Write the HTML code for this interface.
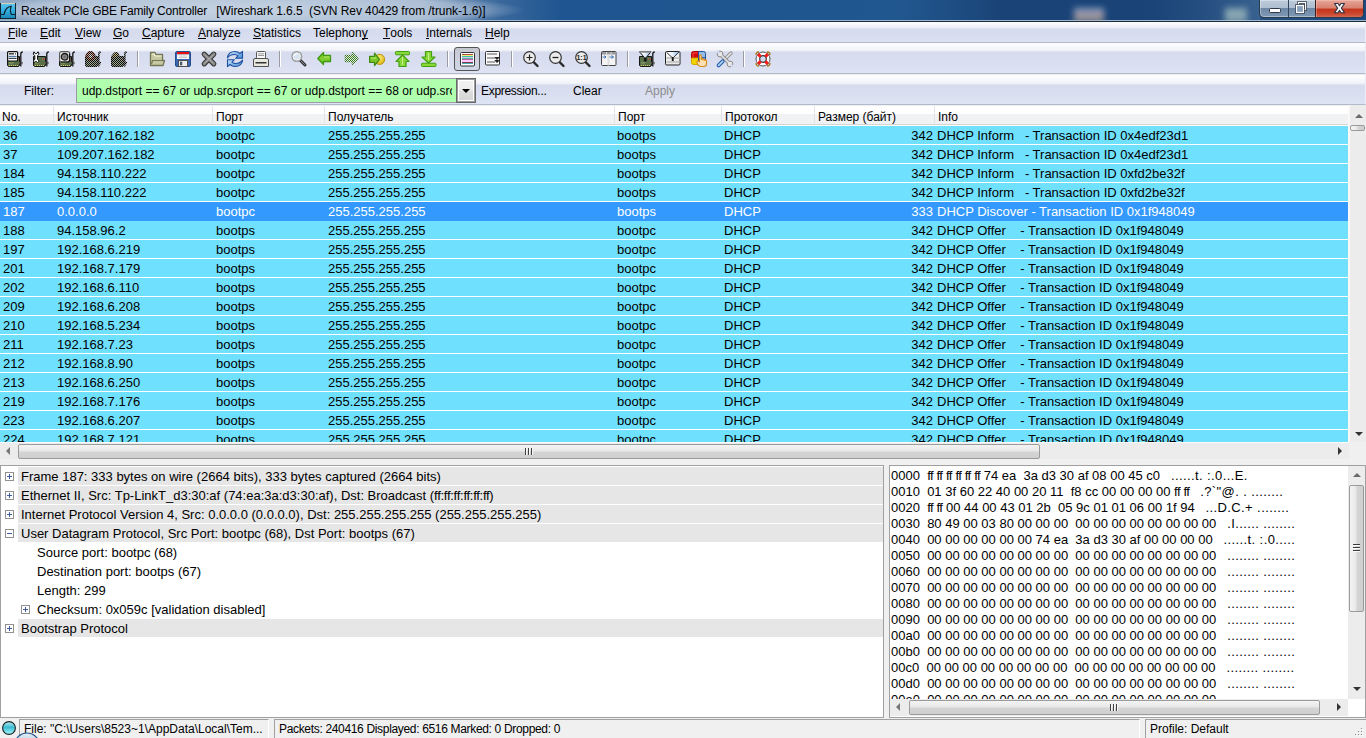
<!DOCTYPE html>
<html><head><meta charset="utf-8">
<style>
*{margin:0;padding:0;box-sizing:border-box}
html,body{width:1366px;height:738px;overflow:hidden;background:#f0f0f0;font-family:"Liberation Sans",sans-serif;color:#000;position:relative}
.abs{position:absolute}
#title{left:0;top:0;width:1366px;height:22px;overflow:hidden;background:linear-gradient(90deg,#8ea6c2 0px,#9bb0c9 200px,#8aa3c0 420px,#3a689c 500px,#1f5590 560px,#21578f 900px,#1a4478 1000px,#1a4478 1200px,#244f80 1260px,#1c4a80 1366px);border-bottom:1px solid #1a2b40}
#title .hl{left:0;top:20px;width:1366px;height:1px;background:#9fb6cf}
#title .glow{left:0;top:0;width:540px;height:20px;background:radial-gradient(ellipse 275px 18px at 250px 10px,rgba(215,225,238,.7),rgba(215,225,238,.45) 80%,rgba(215,225,238,0) 100%)}
#title .blob{top:8px;height:14px;filter:blur(3px);opacity:.8}
#title .txt{left:21px;top:4px;font-size:12px;color:#000;white-space:pre;letter-spacing:-0.13px}
.bar{position:absolute;left:0;width:1366px;border-bottom:1px solid #b3b8cb;border-right:1px solid #eceff8}
#menu{top:22px;height:21px;background:linear-gradient(#fefefe 0,#eef0f7 5px,#e6e9f4 6px,#d5dbee 7px,#d8ddef 15px,#dde2f2 20px)}
#menu span{position:absolute;top:4px;font-size:12px;white-space:pre}
#menu u{text-decoration:none;border-bottom:1px solid #000;display:inline-block;line-height:10px}
#tool{top:43px;height:31px;background:linear-gradient(#fefefe 0,#f2f4f9 7px,#e9ecf6 8px,#d6dcee 9px,#d9def0 20px,#dfe4f4 30px)}
#filt{top:74px;height:31px;background:linear-gradient(#eeeeee 0,#eeeeee 1px,#fefefe 1px,#f2f4f9 9px,#e9ecf6 10px,#d6dcee 11px,#d9def0 20px,#dfe4f4 30px)}
.sep{position:absolute;top:8px;width:2px;height:16px;border-left:1px solid #9c9ca0;border-right:1px solid #fff}
.ico{position:absolute;top:8px;width:16px;height:16px;overflow:visible}
#fbox{left:76px;top:4px;width:381px;height:25px;background:#afffaf;border:1px solid #9c9ca8;font-size:12px;padding:5px 0 0 5px;white-space:pre;overflow:hidden}
#fbtn{left:456px;top:4px;width:20px;height:25px;border:1px solid #6a6a6a;outline:1px solid #9a9a9a;outline-offset:-2px;box-shadow:inset 0 0 0 2px #fff;background:linear-gradient(#f2f2f2,#ececec 48%,#dedede 52%,#d4d4d4)}
#fbtn:after{content:"";position:absolute;left:5px;top:10px;border-left:4px solid transparent;border-right:4px solid transparent;border-top:4px solid #000}
.flab{position:absolute;top:10px;font-size:12px;white-space:pre}
#plist{left:0;top:105px;width:1348px;height:337px;background:#fff;overflow:hidden}
#phead{left:0;top:0;width:1348px;height:21px;background:linear-gradient(#f0f0f0 0,#f0f0f0 1px,#fff 1px,#fff 9px,#f1f2f4 9px,#f1f2f4 19px,#d5d5d5 19px,#d5d5d5 20px,#fff 20px)}
#phead div{position:absolute;top:1px;height:18px;font-size:12px;padding:4px 0 0 3px;border-left:1px solid #e3e4e6;white-space:pre}
#phead div:first-child{border-left:none;padding-left:2px}
.row{position:absolute;left:0;width:1348px;height:19px;background:linear-gradient(#70e0ff 0,#70e0ff 18px,#fff 18px);font-size:13px;white-space:pre}
.row.sel{background:#3399ff;color:#fff}
.row span{position:absolute;top:2px}
#vsb1{left:1348px;top:105px;width:18px;height:337px;background:#ececec;border-left:2px solid #fbf8f8}
.sbtn{position:absolute;width:15px;height:17px}
.up:after{content:"";position:absolute;left:4px;top:6px;border-left:4px solid transparent;border-right:4px solid transparent;border-bottom:4px solid #6a6a6a}
.dn:after{content:"";position:absolute;left:4px;top:7px;border-left:4px solid transparent;border-right:4px solid transparent;border-top:4px solid #333}
.lt:after{content:"";position:absolute;left:5px;top:4px;border-top:4px solid transparent;border-bottom:4px solid transparent;border-right:4px solid #777}
.rt:after{content:"";position:absolute;left:7px;top:4px;border-top:4px solid transparent;border-bottom:4px solid transparent;border-left:4px solid #333}
.thumbv{position:absolute;border:1px solid #9b9b9b;border-radius:2px;background:linear-gradient(90deg,#f4f4f4,#e8e8e8 45%,#d4d4d4 55%,#cfcfcf)}
.griph{position:absolute;width:8px;height:7px;background:repeating-linear-gradient(90deg,#3c3c3c 0,#3c3c3c 2px,transparent 2px,transparent 3px)}
.gripv{position:absolute;width:7px;height:8px;background:repeating-linear-gradient(#3c3c3c 0,#3c3c3c 1px,#fafafa 1px,#fafafa 2px,transparent 2px,transparent 3px)}
.thumbh{position:absolute;border:1px solid #9b9b9b;border-radius:2px;background:linear-gradient(#f4f4f4,#e8e8e8 45%,#d4d4d4 55%,#cfcfcf)}
#hsb1{left:0;top:442px;width:1349px;height:17px;background:#ececec;border-top:1px solid #fafafa}
#detail{left:0;top:465px;width:884px;height:253px;background:#fff;border:1px solid #a0a0a0;border-right-color:#a0a0a0;overflow:hidden}
.dbg{position:absolute;left:17px;width:865px;height:18px;background:#e6e6e6}
.dt{position:absolute;font-size:13px;white-space:pre;padding-top:2px;height:18px}
.exp{position:absolute;width:9px;height:9px;border:1px solid #919191;background:#fff}
.exp:before{content:"";position:absolute;left:1px;top:3px;width:5px;height:1px;background:#3d5ea0}
.exp.plus:after{content:"";position:absolute;left:3px;top:1px;width:1px;height:5px;background:#3d5ea0}
#hex{left:889px;top:465px;width:477px;height:253px;background:#fff;border:1px solid #a0a0a0;overflow:hidden}
.hx{position:absolute;left:1px;font-size:13px;white-space:pre;line-height:16px}
#vsb2{left:1347px;top:1px;width:17px;height:233px;background:#ececec}
#hsb2{left:1px;top:234px;width:457px;height:17px;background:#ececec}
#status{left:0;top:718px;width:1366px;height:20px;background:#f0f0f0}
.pan{position:absolute;top:1px;height:19px;border-top:1px solid #a0a0a0;border-left:1px solid #a0a0a0;border-right:1px solid #fff;font-size:12px;white-space:pre;padding:2px 0 0 4px;overflow:hidden}
</style></head><body>
<div id="title" class="abs">
 <div class="glow abs"></div>
 <div class="hl abs"></div>
 <div class="blob abs" style="left:1074px;width:30px;background:linear-gradient(#a8c0dc,#c8a0a0 60%,#b0c0a0);opacity:.75"></div>
 <div class="blob abs" style="left:1225px;width:22px;background:#c0d4c8;opacity:.75"></div>
 <div class="abs" style="left:1150px;top:0;width:110px;height:20px;background:linear-gradient(90deg,rgba(90,130,170,0),rgba(90,130,170,.35))"></div>
 <svg class="abs" style="left:0;top:3px" width="16" height="16" viewBox="0 0 16 16"><defs><linearGradient id="wsg" x1="0" y1="0" x2="0" y2="1"><stop offset="0" stop-color="#5cc4ec"/><stop offset=".45" stop-color="#36aee0"/><stop offset="1" stop-color="#1887b8"/></linearGradient></defs><rect x="0.5" y="0.5" width="15" height="15" fill="url(#wsg)" stroke="#0c2432"/><path d="M1 0.5 H15" stroke="#d8d0b8"/><path d="M1 11.5 H4 C5 6.5 7.5 3.5 11.2 3.3 C10 6 10.2 10 11.5 11.5 H15" stroke="#0d2533" stroke-width="1.2" fill="none"/></svg>
 <div class="txt abs"><span style="letter-spacing:-.22px">Realtek PCIe GBE Family Controller   </span><span style="letter-spacing:-.07px">[Wireshark 1.6.5  (SVN Rev 40429 from /trunk-1.6)]</span></div>
 <div class="abs" style="left:1259px;top:0;width:105px;height:18px;border:1px solid #2b3a4c;border-top:none;border-radius:0 0 5px 5px;overflow:hidden;background:linear-gradient(#bccbdb,#aebfd1 45%,#6f88a6 50%,#7f98b4 100%);box-shadow:inset 0 0 0 1px rgba(255,255,255,.35)">
  <div class="abs" style="left:28px;top:0;width:1px;height:18px;background:#34465c"></div>
  <div class="abs" style="left:55px;top:0;width:49px;height:18px;background:linear-gradient(#e6a699,#d9806f 45%,#c3341c 50%,#cc4a30 80%,#d9775e);border-left:1px solid #3d1e1a;box-shadow:inset 0 0 0 1px rgba(255,220,210,.35)"></div>
 </div>
 <svg class="abs" style="left:1259px;top:0" width="107" height="20" viewBox="0 0 107 20">
  <rect x="10.5" y="8.5" width="11" height="4" rx="1" fill="#fff" stroke="#2d3644"/>
  <rect x="39.5" y="2.5" width="7" height="7" fill="none" stroke="#2d3644" stroke-width="2.6"/>
  <rect x="39.5" y="2.5" width="7" height="7" fill="none" stroke="#fff" stroke-width="1.2"/>
  <rect x="37.5" y="5.5" width="7" height="7" fill="#8aa2bc" stroke="#2d3644" stroke-width="2.6"/>
  <rect x="37.5" y="5.5" width="7" height="7" fill="#8aa2bc" stroke="#fff" stroke-width="1.2"/>
  <path d="M75.5 3.5 H79 L80.5 5.8 L82 3.5 H85.5 L82.4 8.1 L85.5 12.7 H82 L80.5 10.4 L79 12.7 H75.5 L78.6 8.1 Z" fill="#fafafa" stroke="#2b3345" stroke-width="1.1" stroke-linejoin="round"/>
 </svg>
</div>
<div id="menu" class="bar">
 <span style="left:8px"><u>F</u>ile</span>
 <span style="left:40px"><u>E</u>dit</span>
 <span style="left:75px"><u>V</u>iew</span>
 <span style="left:113px"><u>G</u>o</span>
 <span style="left:142px"><u>C</u>apture</span>
 <span style="left:198px"><u>A</u>nalyze</span>
 <span style="left:253px"><u>S</u>tatistics</span>
 <span style="left:313px">Telephon<u>y</u></span>
 <span style="left:383px"><u>T</u>ools</span>
 <span style="left:426px"><u>I</u>nternals</span>
 <span style="left:485px"><u>H</u>elp</span>
</div>
<div id="tool" class="bar">
<svg width="0" height="0" style="position:absolute"><defs><filter id="lite" color-interpolation-filters="sRGB"><feColorMatrix type="matrix" values=".45 0 0 0 .45  0 .45 0 0 .45  0 0 .45 0 .45  0 0 0 1 0"/></filter><filter id="blk" color-interpolation-filters="sRGB"><feColorMatrix type="matrix" values=".12 0 0 0 0  0 .12 0 0 0  0 0 .12 0 0  0 0 0 1 0"/></filter><pattern id="chk" width="2" height="2" patternUnits="userSpaceOnUse"><rect x="0" y="0" width="1" height="1" fill="#fff"/><rect x="1" y="1" width="1" height="1" fill="#fff"/></pattern><mask id="dith" maskUnits="userSpaceOnUse" x="0" y="0" width="16" height="16"><rect width="16" height="16" fill="url(#chk)"/></mask><pattern id="chk2" width="2" height="2" patternUnits="userSpaceOnUse"><rect x="1" y="0" width="1" height="1" fill="#fff"/><rect x="0" y="1" width="1" height="1" fill="#fff"/></pattern><mask id="dith2" maskUnits="userSpaceOnUse" x="0" y="0" width="16" height="16"><rect width="16" height="16" fill="url(#chk2)"/></mask></defs></svg><div class="abs" style="left:454px;top:4px;width:26px;height:24px;border:1px solid #545454;border-radius:3px;background:linear-gradient(#c4c6ce,#cdd0dc 40%,#d2d7e8)"></div><div class="sep" style="left:137px"></div><div class="sep" style="left:279px"></div><div class="sep" style="left:447px"></div><div class="sep" style="left:511px"></div><div class="sep" style="left:627px"></div><div class="sep" style="left:743px"></div><svg class="ico" style="left:7px;top:8px" width="16" height="16" viewBox="0 0 16 16"><path d="M0.5 5.5 H12.5 V14.5 H11.5 V15.5 H1.5 L0.5 14.5Z" fill="#58704a" stroke="#161616"/><path d="M2 14.5 H3 M4 14.5 H5 M6 14.5 H7 M8 14.5 H9 M10 14.5 H11" stroke="#d8c866" stroke-width="1"/><path d="M2 11.5 H7 M2 12.7 H6" stroke="#8a9a62" stroke-width=".7"/><rect x="12.5" y="10.8" width="3.5" height="2.4" fill="#8f8f8f"/><path d="M15.8 1 Q13.8 1 13.8 3 V15.5" stroke="#151515" fill="none" stroke-width="1.3"/><rect x="9" y="7.5" width="1" height="1.3" fill="#e05050"/><rect x="11" y="7.5" width="1" height="1.3" fill="#e05050"/><rect x="0.6" y="0.6" width="10" height="9.4" rx="1" fill="#fff" stroke="#111" stroke-width="1.2"/><rect x="2" y="2" width="5" height="1.6" fill="#4a4a4a"/><rect x="8" y="2" width="1" height="1.6" fill="#666"/><rect x="1.6" y="4.8" width="8" height="1.1" fill="#3f6d98"/><rect x="1.6" y="6.8" width="8" height="1.1" fill="#1f2f40"/></svg>
<svg class="ico" style="left:33px;top:8px" width="16" height="16" viewBox="0 0 16 16"><path d="M0.5 5.5 H12.5 V14.5 H11.5 V15.5 H1.5 L0.5 14.5Z" fill="#58704a" stroke="#161616"/><path d="M2 14.5 H3 M4 14.5 H5 M6 14.5 H7 M8 14.5 H9 M10 14.5 H11" stroke="#d8c866" stroke-width="1"/><path d="M2 11.5 H7 M2 12.7 H6" stroke="#8a9a62" stroke-width=".7"/><rect x="12.5" y="10.8" width="3.5" height="2.4" fill="#8f8f8f"/><path d="M15.8 1 Q13.8 1 13.8 3 V15.5" stroke="#151515" fill="none" stroke-width="1.3"/><rect x="9" y="7.5" width="1" height="1.3" fill="#e05050"/><rect x="11" y="7.5" width="1" height="1.3" fill="#e05050"/><path d="M1 0.8 L2.2 2.6 H3.8 L5 0.8 L5.8 2 V3.5 L4.5 4.5 V8.5 L5.8 9.5 V11 L4.5 11.5 L3.5 10.5 H2.5 L1.2 11.5 L0.6 10.5 V9.5 L1.8 8.5 V4.5 L0.4 3.5 V2Z" fill="#fff" stroke="#111" stroke-width="1"/></svg>
<svg class="ico" style="left:59px;top:8px" width="16" height="16" viewBox="0 0 16 16"><path d="M0.5 5.5 H12.5 V14.5 H11.5 V15.5 H1.5 L0.5 14.5Z" fill="#58704a" stroke="#161616"/><path d="M2 14.5 H3 M4 14.5 H5 M6 14.5 H7 M8 14.5 H9 M10 14.5 H11" stroke="#d8c866" stroke-width="1"/><path d="M2 11.5 H7 M2 12.7 H6" stroke="#8a9a62" stroke-width=".7"/><rect x="12.5" y="10.8" width="3.5" height="2.4" fill="#8f8f8f"/><path d="M15.8 1 Q13.8 1 13.8 3 V15.5" stroke="#151515" fill="none" stroke-width="1.3"/><rect x="9" y="7.5" width="1" height="1.3" fill="#e05050"/><rect x="11" y="7.5" width="1" height="1.3" fill="#e05050"/><rect x="0.6" y="0.6" width="10" height="10.4" rx="2" fill="#e8e8e8" stroke="#5a5a5a" stroke-width="1.1"/><path d="M10.6 2.5 V9 Q10.6 11 8.6 11 H2" stroke="#111" stroke-width="1.2" fill="none"/><circle cx="5.6" cy="5.8" r="3.3" fill="#8a8a8a" stroke="#1a1a1a" stroke-width="1.3"/><circle cx="5.6" cy="5.8" r="1.3" fill="#6a6a6a"/></svg>
<svg class="ico" style="left:85px;top:8px" width="16" height="16" viewBox="0 0 16 16"><g filter="url(#lite)"><path d="M0.5 5.5 H12.5 V14.5 H11.5 V15.5 H1.5 L0.5 14.5Z" fill="#58704a" stroke="#161616"/><path d="M2 14.5 H3 M4 14.5 H5 M6 14.5 H7 M8 14.5 H9 M10 14.5 H11" stroke="#d8c866" stroke-width="1"/><path d="M2 11.5 H7 M2 12.7 H6" stroke="#8a9a62" stroke-width=".7"/><rect x="12.5" y="10.8" width="3.5" height="2.4" fill="#8f8f8f"/><path d="M15.8 1 Q13.8 1 13.8 3 V15.5" stroke="#151515" fill="none" stroke-width="1.3"/><rect x="9" y="7.5" width="1" height="1.3" fill="#e05050"/><rect x="11" y="7.5" width="1" height="1.3" fill="#e05050"/><circle cx="5.5" cy="5" r="4.5" fill="#c24a1d" stroke="#5a1a0a"/><circle cx="5.5" cy="5" r="2" fill="#fff"/></g><g mask="url(#dith)"><g filter="url(#blk)"><path d="M0.5 5.5 H12.5 V14.5 H11.5 V15.5 H1.5 L0.5 14.5Z" fill="#58704a" stroke="#161616"/><path d="M2 14.5 H3 M4 14.5 H5 M6 14.5 H7 M8 14.5 H9 M10 14.5 H11" stroke="#d8c866" stroke-width="1"/><path d="M2 11.5 H7 M2 12.7 H6" stroke="#8a9a62" stroke-width=".7"/><rect x="12.5" y="10.8" width="3.5" height="2.4" fill="#8f8f8f"/><path d="M15.8 1 Q13.8 1 13.8 3 V15.5" stroke="#151515" fill="none" stroke-width="1.3"/><rect x="9" y="7.5" width="1" height="1.3" fill="#e05050"/><rect x="11" y="7.5" width="1" height="1.3" fill="#e05050"/><circle cx="5.5" cy="5" r="4.5" fill="#c24a1d" stroke="#5a1a0a"/><circle cx="5.5" cy="5" r="2" fill="#fff"/></g></g></svg>
<svg class="ico" style="left:111px;top:8px" width="16" height="16" viewBox="0 0 16 16"><g filter="url(#lite)"><path d="M0.5 5.5 H12.5 V14.5 H11.5 V15.5 H1.5 L0.5 14.5Z" fill="#58704a" stroke="#161616"/><path d="M2 14.5 H3 M4 14.5 H5 M6 14.5 H7 M8 14.5 H9 M10 14.5 H11" stroke="#d8c866" stroke-width="1"/><path d="M2 11.5 H7 M2 12.7 H6" stroke="#8a9a62" stroke-width=".7"/><rect x="12.5" y="10.8" width="3.5" height="2.4" fill="#8f8f8f"/><path d="M15.8 1 Q13.8 1 13.8 3 V15.5" stroke="#151515" fill="none" stroke-width="1.3"/><rect x="9" y="7.5" width="1" height="1.3" fill="#e05050"/><rect x="11" y="7.5" width="1" height="1.3" fill="#e05050"/><path d="M0.5 6 Q3 0 7 2 L8 5 L4 7Z" fill="#c8a030" stroke="#444"/></g><g mask="url(#dith)"><g filter="url(#blk)"><path d="M0.5 5.5 H12.5 V14.5 H11.5 V15.5 H1.5 L0.5 14.5Z" fill="#58704a" stroke="#161616"/><path d="M2 14.5 H3 M4 14.5 H5 M6 14.5 H7 M8 14.5 H9 M10 14.5 H11" stroke="#d8c866" stroke-width="1"/><path d="M2 11.5 H7 M2 12.7 H6" stroke="#8a9a62" stroke-width=".7"/><rect x="12.5" y="10.8" width="3.5" height="2.4" fill="#8f8f8f"/><path d="M15.8 1 Q13.8 1 13.8 3 V15.5" stroke="#151515" fill="none" stroke-width="1.3"/><rect x="9" y="7.5" width="1" height="1.3" fill="#e05050"/><rect x="11" y="7.5" width="1" height="1.3" fill="#e05050"/><path d="M0.5 6 Q3 0 7 2 L8 5 L4 7Z" fill="#c8a030" stroke="#444"/></g></g></svg>
<svg class="ico" style="left:149px;top:8px" width="16" height="16" viewBox="0 0 16 16"><path d="M1.5 1.5 H6 L7 3.5 H13.5 V9.5 H15.5 L14 14.5 H1.5Z" fill="#c6c9a0" stroke="#747658" stroke-width="1.3" stroke-linejoin="round"/><path d="M2.5 13 L3.5 9.5 H15" fill="none" stroke="#747658" stroke-width="1.2"/><path d="M3 3 H5.5 V5 H12.5" stroke="#f4f5e0" fill="none"/></svg>
<svg class="ico" style="left:175px;top:8px" width="16" height="16" viewBox="0 0 16 16"><rect x="0.5" y="0.5" width="15" height="15" rx="1.5" fill="#3a68b0" stroke="#234d8e"/><rect x="2" y="1" width="12" height="2.4" fill="#e31010"/><rect x="2" y="3.4" width="12" height="4.6" fill="#f6f6f6"/><path d="M4 5 H12 M4 6.5 H12" stroke="#ccc"/><rect x="3.5" y="9.5" width="9" height="6" fill="#eee" stroke="#505050"/><rect x="5.3" y="11" width="1.6" height="3" fill="#4a78b5" stroke="#333" stroke-width=".6"/></svg>
<svg class="ico" style="left:201px;top:8px" width="16" height="16" viewBox="0 0 16 16"><path d="M3.2 3.2 L12.8 12.8 M12.8 3.2 L3.2 12.8" stroke="#3a3a3a" stroke-width="5.2" stroke-linecap="round"/><path d="M3.2 3.2 L12.8 12.8 M12.8 3.2 L3.2 12.8" stroke="#8e8e8e" stroke-width="3" stroke-linecap="round"/><path d="M4 4 L12 12 M12 4 L4 12" stroke="#a8a8a8" stroke-width="1" /></svg>
<svg class="ico" style="left:227px;top:8px" width="16" height="16" viewBox="0 0 16 16"><defs><linearGradient id="rlg" x1="0" y1="0" x2="1" y2="1"><stop offset="0" stop-color="#d0e4f8"/><stop offset=".5" stop-color="#88b8e8"/><stop offset="1" stop-color="#4a88d0"/></linearGradient></defs><path d="M0.4 6.8 C0.9 2.8 4 0.5 8 0.5 C10.2 0.5 11.8 1.3 13 2.5 L15.5 0.4 V7.3 H8.6 L11 4.9 C10 4 8.8 3.5 7.2 3.5 C4.2 3.5 1.8 5 0.4 6.8 Z" fill="url(#rlg)" stroke="#1a4e9e" stroke-width="1.1" stroke-linejoin="round"/><path d="M15.6 9.2 C15.1 13.2 12 15.5 8 15.5 C5.8 15.5 4.2 14.7 3 13.5 L0.5 15.6 V8.7 H7.4 L5 11.1 C6 12 7.2 12.5 8.8 12.5 C11.8 12.5 14.2 11 15.6 9.2 Z" fill="url(#rlg)" stroke="#1a4e9e" stroke-width="1.1" stroke-linejoin="round"/></svg>
<svg class="ico" style="left:253px;top:8px" width="16" height="16" viewBox="0 0 16 16"><rect x="3.5" y="0.5" width="9" height="7" rx="1" fill="#f8f8f8" stroke="#555"/><path d="M5 2.8 H11 M5 4.5 H11" stroke="#999"/><path d="M0.5 9 Q0.5 7.5 2 7.5 H14 Q15.5 7.5 15.5 9 V15.5 H0.5Z" fill="#e8e8e0" stroke="#505050"/><rect x="2.5" y="11" width="11" height="1.5" fill="#333"/></svg>
<svg class="ico" style="left:291px;top:8px" width="16" height="16" viewBox="0 0 16 16"><path d="M9.5 9.5 L14 14" stroke="#333" stroke-width="3" stroke-linecap="round"/><path d="M10 10 L13.8 13.8" stroke="#888" stroke-width="1"/><circle cx="5.8" cy="5.5" r="4.8" fill="#d8e4ee" stroke="#9a9a9a" stroke-width="1.4"/><circle cx="5.8" cy="5.5" r="3.6" fill="none" stroke="#f4f4f4" stroke-width=".8"/><path d="M3.5 5 Q4 3 6 3" stroke="#fff" fill="none"/></svg>
<svg class="ico" style="left:317px;top:8px" width="16" height="16" viewBox="0 0 16 16"><path d="M0.8 7.5 L6.5 1.5 V4.5 H13.5 V10.5 H6.5 V13.5Z" fill="#80cc2e" stroke="#3d9a10" stroke-width="1.3" stroke-linejoin="round"/><path d="M7 6 H12.5" stroke="#b8ee70"/></svg>
<svg class="ico" style="left:343px;top:8px" width="16" height="16" viewBox="0 0 16 16"><g mask="url(#dith)"><path d="M15 7.5 L9.3 1.5 V4.5 H2.3 V10.5 H9.3 V13.5Z" fill="#3c7a22" stroke="#3c7a22" stroke-width="1.3" stroke-linejoin="round"/></g><g mask="url(#dith2)"><path d="M14.5 7.5 L9.3 2 V5 H2.8 V10 H9.3 V13Z" fill="#e4f0dc"/></g></svg>
<svg class="ico" style="left:369px;top:8px" width="16" height="16" viewBox="0 0 16 16"><defs><radialGradient id="ygg" cx=".4" cy=".35" r=".7"><stop offset="0" stop-color="#fff27a"/><stop offset="1" stop-color="#d8b010"/></radialGradient></defs><circle cx="10.6" cy="8.4" r="5.1" fill="url(#ygg)" stroke="#b89010" stroke-width=".9"/><path d="M0.6 5.3 H5.5 V2 L10.5 8.3 L5.5 14.5 V11.3 H0.6Z" fill="#7cc82c" stroke="#3d8a10" stroke-width="1.2" stroke-linejoin="round"/><path d="M2 7 H7" stroke="#b8ee70"/></svg>
<svg class="ico" style="left:395px;top:8px" width="16" height="16" viewBox="0 0 16 16"><rect x="0.5" y="0.5" width="14" height="3.3" rx=".8" fill="#88d838" stroke="#44a010" stroke-width="1"/><path d="M7.5 4 L14 10.5 H11 V15.5 H4 V10.5 H1Z" fill="#88d838" stroke="#44a010" stroke-width="1.2" stroke-linejoin="round"/><path d="M7.5 6 V14" stroke="#c8f090"/></svg>
<svg class="ico" style="left:421px;top:8px" width="16" height="16" viewBox="0 0 16 16"><rect x="0.5" y="12.2" width="14.5" height="3.3" rx=".8" fill="#88d838" stroke="#44a010" stroke-width="1"/><path d="M4.5 0.5 H10.5 V6 H14 L7.5 12 L1 6 H4.5Z" fill="#88d838" stroke="#44a010" stroke-width="1.2" stroke-linejoin="round"/><path d="M7.5 2 V9" stroke="#c8f090"/></svg>
<svg class="ico" style="left:460px;top:9px" width="16" height="16" viewBox="0 0 16 16"><rect x="0.5" y="0.5" width="14" height="13.5" rx="1" fill="#fff" stroke="#333"/><rect x="2" y="2" width="11" height="1" fill="#b04848"/><rect x="2" y="3" width="11" height="1" fill="#f0f070"/><rect x="2" y="4" width="11" height="1" fill="#40c0a0"/><rect x="2" y="5" width="11" height="1" fill="#c8c8f8"/><rect x="2" y="6" width="11" height="1" fill="#60b890"/><rect x="2" y="7" width="11" height="1" fill="#c060b0"/><rect x="2" y="8" width="11" height="2" fill="#ffc8ff"/><rect x="2" y="10" width="11" height="1" fill="#8a3848"/><rect x="2" y="11" width="11" height="1" fill="#40b0b0"/></svg>
<svg class="ico" style="left:485px;top:8px" width="16" height="16" viewBox="0 0 16 16"><rect x="0.5" y="0.5" width="14" height="13.5" rx="1" fill="#fafafa" stroke="#333"/><rect x="2" y="2" width="10" height="2" fill="#aaa"/><rect x="2" y="6" width="8" height="2" fill="#aaa"/><rect x="2" y="10" width="8" height="2" fill="#aaa"/><path d="M10 6.5 H14 L12 8.5Z M10 9.5 H14 L12 11.5Z" fill="#111" stroke="#111" stroke-width=".8"/></svg>
<svg class="ico" style="left:523px;top:8px" width="16" height="16" viewBox="0 0 16 16"><path d="M9.5 10 L14.5 15" stroke="#2a2a2a" stroke-width="2.4" stroke-linecap="round"/><circle cx="6.5" cy="6.5" r="5.8" fill="#ececec" stroke="#333" stroke-width="1.2"/><path d="M3.5 6.5 H9.5 M6.5 3.5 V9.5" stroke="#222" stroke-width="1.2"/></svg>
<svg class="ico" style="left:549px;top:8px" width="16" height="16" viewBox="0 0 16 16"><path d="M9.5 10 L14.5 15" stroke="#2a2a2a" stroke-width="2.4" stroke-linecap="round"/><circle cx="6.5" cy="6.5" r="5.8" fill="#ececec" stroke="#333" stroke-width="1.2"/><path d="M3.5 6.5 H9.5" stroke="#222" stroke-width="1.3"/></svg>
<svg class="ico" style="left:575px;top:8px" width="16" height="16" viewBox="0 0 16 16"><path d="M9.5 10 L14.5 15" stroke="#2a2a2a" stroke-width="2.4" stroke-linecap="round"/><circle cx="6.5" cy="6.5" r="5.8" fill="#ececec" stroke="#333" stroke-width="1.2"/><text x="6.5" y="9" font-size="7" font-weight="bold" text-anchor="middle" font-family="Liberation Sans" fill="#222">1:1</text></svg>
<svg class="ico" style="left:601px;top:8px" width="16" height="16" viewBox="0 0 16 16"><rect x="0.5" y="0.5" width="14.5" height="14" rx="1" fill="#f4f4f4" stroke="#444"/><rect x="1" y="1" width="13.5" height="2.5" fill="#999"/><path d="M5.5 1 V3.5 M10 1 V3.5" stroke="#ddd"/><rect x="6.5" y="3.5" width="2" height="11" fill="#ddd"/><path d="M1.5 6 H5 M3.5 4.5 L5 6 L3.5 7.5 M8.5 6 H12.5 M10.5 4.5 L12.5 6 L10.5 7.5" stroke="#3a70b0" stroke-width="1" fill="none"/></svg>
<svg class="ico" style="left:639px;top:8px" width="16" height="16" viewBox="0 0 16 16"><path d="M0.5 5.5 H12.5 V14.5 H11.5 V15.5 H1.5 L0.5 14.5Z" fill="#58704a" stroke="#161616"/><path d="M2 14.5 H3 M4 14.5 H5 M6 14.5 H7 M8 14.5 H9 M10 14.5 H11" stroke="#d8c866" stroke-width="1"/><path d="M2 11.5 H7 M2 12.7 H6" stroke="#8a9a62" stroke-width=".7"/><rect x="12.5" y="10.8" width="3.5" height="2.4" fill="#8f8f8f"/><path d="M15.8 1 Q13.8 1 13.8 3 V15.5" stroke="#151515" fill="none" stroke-width="1.3"/><rect x="9" y="7.5" width="1" height="1.3" fill="#e05050"/><rect x="11" y="7.5" width="1" height="1.3" fill="#e05050"/><defs><linearGradient id="fng" x1="0" y1="0" x2="1" y2="0"><stop offset="0" stop-color="#ffffff"/><stop offset=".5" stop-color="#e8f0f8"/><stop offset="1" stop-color="#7aa8dc"/></linearGradient></defs><path d="M0.5 0.8 H12 L7.2 6.5 V10 H5.4 V6.5Z" fill="url(#fng)" stroke="#1a1a1a" stroke-width="1"/><rect x="0.8" y="0.5" width="11" height="1.2" fill="#a0a0a0"/><rect x="5.5" y="6.5" width="1.6" height="3.8" fill="#111"/></svg>
<svg class="ico" style="left:665px;top:8px" width="16" height="16" viewBox="0 0 16 16"><defs><linearGradient id="dfg" x1="0" y1="0" x2="0" y2="1"><stop offset="0" stop-color="#fafafa"/><stop offset="1" stop-color="#e4e4e4"/></linearGradient></defs><rect x="0.5" y="0.5" width="14.5" height="13.5" rx="1.2" fill="url(#dfg)" stroke="#222" stroke-width="1"/><rect x="1.5" y="6.2" width="13" height="1.8" fill="#c4c4c4"/><rect x="1.5" y="10" width="13" height="1.8" fill="#c4c4c4"/><path d="M1.5 1 H14 L8.6 6.5 H6.9Z" fill="url(#fng)"/><path d="M1.5 1.2 L7 6.5 M14 1.2 L8.5 6.5" stroke="#222" stroke-width=".9"/><rect x="6.8" y="6" width="1.9" height="4" rx=".6" fill="#111"/></svg>
<svg class="ico" style="left:691px;top:8px" width="16" height="16" viewBox="0 0 16 16"><path d="M7.5 0.5 H2.5 Q0.5 0.5 0.5 2.5 V7 H7.5Z" fill="#d80808" stroke="#b00000" stroke-width="1"/><path d="M7.5 0.5 H12.5 Q14.5 0.5 14.5 2.5 V7 H7.5Z" fill="#94bcea" stroke="#1f4e9a" stroke-width="1"/><path d="M0.5 7 V11.5 Q0.5 13.5 2.5 13.5 H7.5 V7Z" fill="#f0d400" stroke="#d0a800" stroke-width="1"/><path d="M14.5 7 V11.5 Q14.5 13.5 12.5 13.5 H7.5 V7Z" fill="#f4f8ff" stroke="#1f4e9a" stroke-width="1"/><path d="M2 2 H6.5 M2 2 V6" stroke="#f06060" stroke-width=".8"/><path d="M8.5 11 V5 Q8.5 3.8 9.4 3.8 Q10.3 3.8 10.3 5 V8.5 Q10.3 7.6 11.2 7.6 Q12 7.6 12 8.5 V9 Q12 8.2 12.9 8.2 Q13.8 8.2 13.8 9 V9.5 Q13.8 8.8 14.6 8.8 Q15.5 8.8 15.5 9.8 V13 Q15.5 15.5 13 15.5 H9.5 Q7.5 15.5 6.5 13 L5.8 11.2 Q5.8 10 6.8 10 Q7.8 10 8.5 11 Z" fill="#fde0b4" stroke="#d68a16" stroke-width="1.1" stroke-linejoin="round"/></svg>
<svg class="ico" style="left:717px;top:8px" width="16" height="16" viewBox="0 0 16 16"><path d="M8 8 L14 2" stroke="#8a8a8a" stroke-width="3.2" stroke-linecap="round"/><path d="M8 8 L14 2" stroke="#e8e8e8" stroke-width="1.6" stroke-linecap="round"/><path d="M3 3 L13 13" stroke="#8a8a8a" stroke-width="3.4"/><circle cx="3" cy="3" r="2.9" fill="#e8e8e8" stroke="#8a8a8a" stroke-width="1"/><circle cx="13" cy="13" r="2.9" fill="#e8e8e8" stroke="#8a8a8a" stroke-width="1"/><path d="M3 3 L13 13" stroke="#e8e8e8" stroke-width="1.6"/><path d="M-0.5 -0.5 L2.6 2.6 M16.5 16.5 L13.4 13.4" stroke="#d6dcee" stroke-width="2.2"/><path d="M1.6 14.4 L5.6 10.4" stroke="#2058a8" stroke-width="4" stroke-linecap="round"/><path d="M1.6 14.4 L5.6 10.4" stroke="#a8d0f4" stroke-width="2" stroke-linecap="round"/></svg>
<svg class="ico" style="left:755px;top:8px" width="16" height="16" viewBox="0 0 16 16"><circle cx="8" cy="8" r="7" fill="#fff" stroke="#555" stroke-width="1"/><circle cx="8" cy="8" r="3.3" fill="#d3d9ee" stroke="#333" stroke-width="1.2"/><path d="M3.2 3.2 L5.6 5.6 M12.8 3.2 L10.4 5.6 M3.2 12.8 L5.6 10.4 M12.8 12.8 L10.4 10.4" stroke="#ff1a1a" stroke-width="3.2"/><path d="M1 4 Q1 1 4 1 M12 1 Q15 1 15 4 M15 12 Q15 15 12 15 M4 15 Q1 15 1 12" stroke="#a87818" stroke-width="1.3" fill="none"/></svg>
</div>
<div id="filt" class="bar">
 <div class="flab" style="left:24px">Filter:</div>
 <div id="fbox" class="abs"><div style="width:370px;overflow:hidden">udp.dstport == 67 or udp.srcport == 67 or udp.dstport == 68 or udp.srcport == 68</div></div>
 <div id="fbtn" class="abs"></div>
 <div class="flab" style="left:481px;letter-spacing:-.3px">Expression...</div>
 <div class="flab" style="left:573px">Clear</div>
 <div class="flab" style="left:645px;color:#8d8d8d">Apply</div>
</div>
<div id="plist" class="abs">
 <div id="phead" class="abs"><div style="left:0px;width:53px">No.</div><div style="left:53px;width:159px">Источник</div><div style="left:212px;width:112px">Порт</div><div style="left:324px;width:290px">Получатель</div><div style="left:614px;width:107px">Порт</div><div style="left:721px;width:93px">Протокол</div><div style="left:814px;width:120px">Размер (байт)</div><div style="left:934px;width:415px">Info</div></div>
<div class="row" style="top:21px"><span style="left:3px">36</span><span style="left:57px">109.207.162.182</span><span style="left:216px">bootpc</span><span style="left:328px">255.255.255.255</span><span style="left:617px">bootps</span><span style="left:724px">DHCP</span><span class="r" style="right:415px">342</span><span style="left:937px">DHCP Inform   - Transaction ID 0x4edf23d1</span></div>
<div class="row" style="top:40px"><span style="left:3px">37</span><span style="left:57px">109.207.162.182</span><span style="left:216px">bootpc</span><span style="left:328px">255.255.255.255</span><span style="left:617px">bootps</span><span style="left:724px">DHCP</span><span class="r" style="right:415px">342</span><span style="left:937px">DHCP Inform   - Transaction ID 0x4edf23d1</span></div>
<div class="row" style="top:59px"><span style="left:3px">184</span><span style="left:57px">94.158.110.222</span><span style="left:216px">bootpc</span><span style="left:328px">255.255.255.255</span><span style="left:617px">bootps</span><span style="left:724px">DHCP</span><span class="r" style="right:415px">342</span><span style="left:937px">DHCP Inform   - Transaction ID 0xfd2be32f</span></div>
<div class="row" style="top:78px"><span style="left:3px">185</span><span style="left:57px">94.158.110.222</span><span style="left:216px">bootpc</span><span style="left:328px">255.255.255.255</span><span style="left:617px">bootps</span><span style="left:724px">DHCP</span><span class="r" style="right:415px">342</span><span style="left:937px">DHCP Inform   - Transaction ID 0xfd2be32f</span></div>
<div class="row sel" style="top:97px"><span style="left:3px">187</span><span style="left:57px">0.0.0.0</span><span style="left:216px">bootpc</span><span style="left:328px">255.255.255.255</span><span style="left:617px">bootps</span><span style="left:724px">DHCP</span><span class="r" style="right:415px">333</span><span style="left:937px">DHCP Discover - Transaction ID 0x1f948049</span></div>
<div class="row" style="top:116px"><span style="left:3px">188</span><span style="left:57px">94.158.96.2</span><span style="left:216px">bootps</span><span style="left:328px">255.255.255.255</span><span style="left:617px">bootpc</span><span style="left:724px">DHCP</span><span class="r" style="right:415px">342</span><span style="left:937px">DHCP Offer    - Transaction ID 0x1f948049</span></div>
<div class="row" style="top:135px"><span style="left:3px">197</span><span style="left:57px">192.168.6.219</span><span style="left:216px">bootps</span><span style="left:328px">255.255.255.255</span><span style="left:617px">bootpc</span><span style="left:724px">DHCP</span><span class="r" style="right:415px">342</span><span style="left:937px">DHCP Offer    - Transaction ID 0x1f948049</span></div>
<div class="row" style="top:154px"><span style="left:3px">201</span><span style="left:57px">192.168.7.179</span><span style="left:216px">bootps</span><span style="left:328px">255.255.255.255</span><span style="left:617px">bootpc</span><span style="left:724px">DHCP</span><span class="r" style="right:415px">342</span><span style="left:937px">DHCP Offer    - Transaction ID 0x1f948049</span></div>
<div class="row" style="top:173px"><span style="left:3px">202</span><span style="left:57px">192.168.6.110</span><span style="left:216px">bootps</span><span style="left:328px">255.255.255.255</span><span style="left:617px">bootpc</span><span style="left:724px">DHCP</span><span class="r" style="right:415px">342</span><span style="left:937px">DHCP Offer    - Transaction ID 0x1f948049</span></div>
<div class="row" style="top:192px"><span style="left:3px">209</span><span style="left:57px">192.168.6.208</span><span style="left:216px">bootps</span><span style="left:328px">255.255.255.255</span><span style="left:617px">bootpc</span><span style="left:724px">DHCP</span><span class="r" style="right:415px">342</span><span style="left:937px">DHCP Offer    - Transaction ID 0x1f948049</span></div>
<div class="row" style="top:211px"><span style="left:3px">210</span><span style="left:57px">192.168.5.234</span><span style="left:216px">bootps</span><span style="left:328px">255.255.255.255</span><span style="left:617px">bootpc</span><span style="left:724px">DHCP</span><span class="r" style="right:415px">342</span><span style="left:937px">DHCP Offer    - Transaction ID 0x1f948049</span></div>
<div class="row" style="top:230px"><span style="left:3px">211</span><span style="left:57px">192.168.7.23</span><span style="left:216px">bootps</span><span style="left:328px">255.255.255.255</span><span style="left:617px">bootpc</span><span style="left:724px">DHCP</span><span class="r" style="right:415px">342</span><span style="left:937px">DHCP Offer    - Transaction ID 0x1f948049</span></div>
<div class="row" style="top:249px"><span style="left:3px">212</span><span style="left:57px">192.168.8.90</span><span style="left:216px">bootps</span><span style="left:328px">255.255.255.255</span><span style="left:617px">bootpc</span><span style="left:724px">DHCP</span><span class="r" style="right:415px">342</span><span style="left:937px">DHCP Offer    - Transaction ID 0x1f948049</span></div>
<div class="row" style="top:268px"><span style="left:3px">213</span><span style="left:57px">192.168.6.250</span><span style="left:216px">bootps</span><span style="left:328px">255.255.255.255</span><span style="left:617px">bootpc</span><span style="left:724px">DHCP</span><span class="r" style="right:415px">342</span><span style="left:937px">DHCP Offer    - Transaction ID 0x1f948049</span></div>
<div class="row" style="top:287px"><span style="left:3px">219</span><span style="left:57px">192.168.7.176</span><span style="left:216px">bootps</span><span style="left:328px">255.255.255.255</span><span style="left:617px">bootpc</span><span style="left:724px">DHCP</span><span class="r" style="right:415px">342</span><span style="left:937px">DHCP Offer    - Transaction ID 0x1f948049</span></div>
<div class="row" style="top:306px"><span style="left:3px">223</span><span style="left:57px">192.168.6.207</span><span style="left:216px">bootps</span><span style="left:328px">255.255.255.255</span><span style="left:617px">bootpc</span><span style="left:724px">DHCP</span><span class="r" style="right:415px">342</span><span style="left:937px">DHCP Offer    - Transaction ID 0x1f948049</span></div>
<div class="row" style="top:325px"><span style="left:3px">224</span><span style="left:57px">192.168.7.121</span><span style="left:216px">bootps</span><span style="left:328px">255.255.255.255</span><span style="left:617px">bootpc</span><span style="left:724px">DHCP</span><span class="r" style="right:415px">342</span><span style="left:937px">DHCP Offer    - Transaction ID 0x1f948049</span></div>
</div>
<div id="vsb1" class="abs">
 <div class="sbtn up" style="left:1px;top:3px"></div>
 <div class="thumbv" style="left:0px;top:20px;width:15px;height:6px"></div>
 <div class="sbtn dn" style="left:1px;top:320px"></div>
</div>
<div id="hsb1" class="abs">
 <div class="sbtn lt" style="left:1px;top:0"></div>
 <div class="thumbh" style="left:18px;top:1px;width:1022px;height:15px"><div class="griph" style="left:506px;top:3px;width:8px;background:repeating-linear-gradient(90deg,#404040 0,#404040 1px,#f8f8f8 1px,#f8f8f8 2px,transparent 2px,transparent 3px)"></div></div>
 <div class="sbtn rt" style="left:1331px;top:0"></div>
</div>
<div id="detail" class="abs">
<div class="dbg" style="top:1px"></div><div class="exp plus" style="left:4px;top:6px"></div><div class="dt" style="left:20px;top:1px">Frame 187: 333 bytes on wire (2664 bits), 333 bytes captured (2664 bits)</div>
<div class="dbg" style="top:20px"></div><div class="exp plus" style="left:4px;top:25px"></div><div class="dt" style="left:20px;top:20px">Ethernet II, Src: Tp-LinkT_d3:30:af (74:ea:3a:d3:30:af), Dst: Broadcast (<span style="letter-spacing:-.28px">ff:ff:ff:ff:ff:ff</span>)</div>
<div class="dbg" style="top:39px"></div><div class="exp plus" style="left:4px;top:44px"></div><div class="dt" style="left:20px;top:39px">Internet Protocol Version 4, Src: 0.0.0.0 (0.0.0.0), Dst: 255.255.255.255 (255.255.255.255)</div>
<div class="dbg" style="top:58px"></div><div class="exp minus" style="left:4px;top:63px"></div><div class="dt" style="left:20px;top:58px">User Datagram Protocol, Src Port: bootpc (68), Dst Port: bootps (67)</div>
<div class="dt" style="left:36px;top:77px">Source port: bootpc (68)</div>
<div class="dt" style="left:36px;top:96px">Destination port: bootps (67)</div>
<div class="dt" style="left:36px;top:115px">Length: 299</div>
<div class="exp plus" style="left:20px;top:139px"></div><div class="dt" style="left:36px;top:134px">Checksum: 0x059c [validation disabled]</div>
<div class="dbg" style="top:153px"></div><div class="exp plus" style="left:4px;top:158px"></div><div class="dt" style="left:20px;top:153px">Bootstrap Protocol</div>
</div>
<div id="hex" class="abs">
<div class="hx" style="top:2px">0000  <span style="letter-spacing:-.6px">ff</span> <span style="letter-spacing:-.6px">ff</span> <span style="letter-spacing:-.6px">ff</span> <span style="letter-spacing:-.6px">ff</span> <span style="letter-spacing:-.6px">ff</span> <span style="letter-spacing:-.6px">ff</span> 74 ea  3a d3 30 af 08 00 45 c0   <span style="letter-spacing:.4px">......t. :.0...E.</span></div><div class="hx" style="top:18px">0010  01 3f 60 22 40 00 20 11  f8 cc 00 00 00 00 <span style="letter-spacing:-.6px">ff</span> <span style="letter-spacing:-.6px">ff</span>   <span style="letter-spacing:.4px">.?`&quot;@. . ........</span></div><div class="hx" style="top:34px">0020  <span style="letter-spacing:-.6px">ff</span> <span style="letter-spacing:-.6px">ff</span> 00 44 00 43 01 2b  05 9c 01 01 06 00 1f 94   <span style="letter-spacing:.4px">...D.C.+ ........</span></div><div class="hx" style="top:50px">0030  80 49 00 03 80 00 00 00  00 00 00 00 00 00 00 00   <span style="letter-spacing:.4px">.I...... ........</span></div><div class="hx" style="top:66px">0040  00 00 00 00 00 00 74 ea  3a d3 30 af 00 00 00 00   <span style="letter-spacing:.4px">......t. :.0.....</span></div><div class="hx" style="top:82px">0050  00 00 00 00 00 00 00 00  00 00 00 00 00 00 00 00   <span style="letter-spacing:.4px">........ ........</span></div><div class="hx" style="top:98px">0060  00 00 00 00 00 00 00 00  00 00 00 00 00 00 00 00   <span style="letter-spacing:.4px">........ ........</span></div><div class="hx" style="top:114px">0070  00 00 00 00 00 00 00 00  00 00 00 00 00 00 00 00   <span style="letter-spacing:.4px">........ ........</span></div><div class="hx" style="top:130px">0080  00 00 00 00 00 00 00 00  00 00 00 00 00 00 00 00   <span style="letter-spacing:.4px">........ ........</span></div><div class="hx" style="top:146px">0090  00 00 00 00 00 00 00 00  00 00 00 00 00 00 00 00   <span style="letter-spacing:.4px">........ ........</span></div><div class="hx" style="top:162px">00a0  00 00 00 00 00 00 00 00  00 00 00 00 00 00 00 00   <span style="letter-spacing:.4px">........ ........</span></div><div class="hx" style="top:178px">00b0  00 00 00 00 00 00 00 00  00 00 00 00 00 00 00 00   <span style="letter-spacing:.4px">........ ........</span></div><div class="hx" style="top:194px">00c0  00 00 00 00 00 00 00 00  00 00 00 00 00 00 00 00   <span style="letter-spacing:.4px">........ ........</span></div><div class="hx" style="top:210px">00d0  00 00 00 00 00 00 00 00  00 00 00 00 00 00 00 00   <span style="letter-spacing:.4px">........ ........</span></div><div class="hx" style="top:226px">00e0  00 00 00 00 00 00 00 00  00 00 00 00 00 00 00 00   <span style="letter-spacing:.4px">........ ........</span></div>
 <div id="vsb2h" class="abs" style="left:458px;top:0;width:17px;height:233px;background:#ececec">
  <div class="sbtn up" style="left:1px;top:1px"></div>
  <div class="thumbv" style="left:1px;top:19px;width:15px;height:127px"><div class="gripv" style="left:3px;top:58px"></div></div>
  <div class="sbtn dn" style="left:1px;top:214px"></div>
 </div>
 <div class="abs" style="left:0;top:233px;width:458px;height:17px;background:#ececec">
  <div class="sbtn lt" style="left:1px;top:0"></div>
  <div class="thumbh" style="left:19px;top:1px;width:411px;height:15px"><div class="griph" style="left:200px;top:3px;width:8px;background:repeating-linear-gradient(90deg,#404040 0,#404040 1px,#f8f8f8 1px,#f8f8f8 2px,transparent 2px,transparent 3px)"></div></div>
  <div class="sbtn rt" style="left:440px;top:0"></div>
 </div>
 <div class="abs" style="left:458px;top:233px;width:17px;height:18px;background:#fff"></div>
</div>
<div id="status" class="abs">
 <svg class="abs" style="left:2px;top:3px" width="15" height="15" viewBox="0 0 15 15"><defs><linearGradient id="sg" x1="0" y1="0" x2="0" y2="1"><stop offset="0" stop-color="#b8eef6"/><stop offset=".45" stop-color="#3cbad2"/><stop offset="1" stop-color="#a8fcff"/></linearGradient></defs><circle cx="7" cy="7" r="6.4" fill="url(#sg)" stroke="#1c2424" stroke-width="1.1"/></svg>
 <div class="pan" style="left:19px;width:250px">File: "C:\Users\8523~1\AppData\Local\Tem...</div>
 <div class="pan" style="left:274px;width:866px;letter-spacing:-.33px">Packets: 240416 Displayed: 6516 Marked: 0 Dropped: 0</div>
 <div class="pan" style="left:1145px;width:221px;border-right:none">Profile: Default</div>
 <svg class="abs" style="left:1354px;top:10px" width="10" height="9" viewBox="0 0 10 9"><g fill="#fff"><rect x="8" y="1" width="1" height="1"/><rect x="5" y="4" width="1" height="1"/><rect x="8" y="4" width="1" height="1"/><rect x="2" y="7" width="1" height="1"/><rect x="5" y="7" width="1" height="1"/><rect x="8" y="7" width="1" height="1"/></g><g fill="#8a8a8a"><rect x="7" y="0" width="1" height="1"/><rect x="4" y="3" width="1" height="1"/><rect x="7" y="3" width="1" height="1"/><rect x="1" y="6" width="1" height="1"/><rect x="4" y="6" width="1" height="1"/><rect x="7" y="6" width="1" height="1"/></g></svg>
 <svg class="abs" style="left:14px;top:14px" width="28" height="6" viewBox="0 0 28 6"><defs><linearGradient id="orb" x1="0" y1="0" x2="0" y2="1"><stop offset="0" stop-color="#e4eef6"/><stop offset="1" stop-color="#8fb0cc"/></linearGradient></defs><ellipse cx="13" cy="11" rx="11.5" ry="10" fill="url(#orb)" stroke="#2a5a88" stroke-width="1.2"/></svg>
</div>
</body></html>
